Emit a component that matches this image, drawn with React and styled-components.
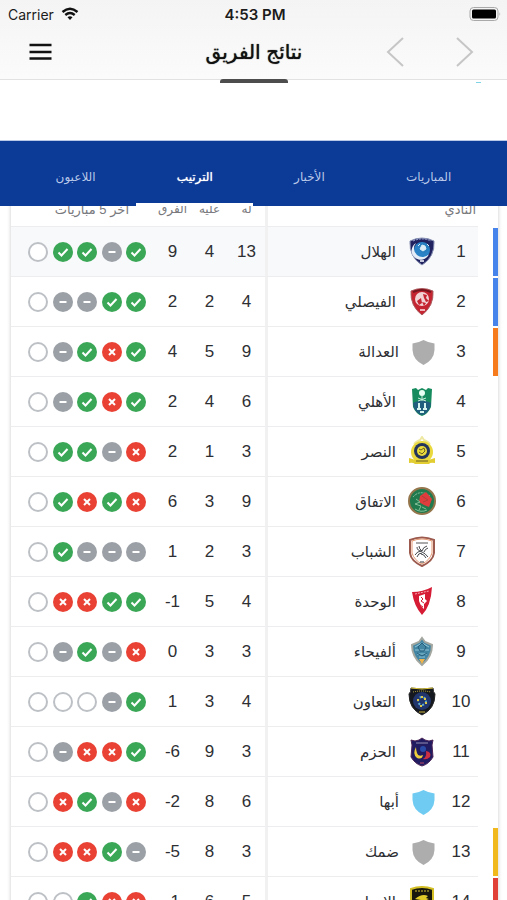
import styled, { createGlobalStyle } from 'styled-components';

const GlobalStyle = createGlobalStyle`
  * {
    box-sizing: border-box;
  }

  body {
    margin: 0;
    background: #fff;
    color: #2e2f33;
    font-family: 'Liberation Sans', 'DejaVu Sans', sans-serif;
  }
`;

const Screen = styled.div`
  display: flex;
  flex-direction: column;
  height: 100vh;
  overflow: hidden;
`;

const Header = styled.header`
  background: linear-gradient(#f4f4f4, #fbfbfb);
  border-bottom: 1px solid #e2e2e2;
`;

const StatusBar = styled.div`
  display: grid;
  grid-template-columns: 1fr auto 1fr;
  align-items: center;
  height: 28px;
  padding: 0 5px 0 8px;
  color: #1c1c1c;
  font-family: Inter, sans-serif;
  font-size: 14px;
`;

const Carrier = styled.div`
  display: flex;
  align-items: center;
  gap: 7px;
`;

const Clock = styled.time`
  font-size: 15px;
  font-weight: 600;
`;

const BatteryIcon = styled.svg`
  justify-self: end;
`;

const NavBar = styled.div`
  display: grid;
  grid-template-columns: 1fr auto 1fr;
  align-items: center;
  height: 51px;
  padding: 0 32px 4px 28px;
`;

const Title = styled.h1`
  margin: 0;
  padding-left: 5px;
  color: #111;
  font-size: 20px;
  font-weight: 400;
  line-height: 28px;
  text-shadow: 0 0 1px #111;
`;

const IconButton = styled.button`
  display: flex;
  padding: 0;
  border: 0;
  background: none;
  cursor: pointer;
`;

const Arrows = styled.div`
  display: flex;
  justify-content: flex-end;
  gap: 50px;
`;

const Banner = styled.div`
  display: grid;
  grid-template-columns: 1fr auto 1fr;
  align-items: start;
  flex: none;
  height: 62px;
  margin-top: -1px;
  padding-right: 26px;
  padding-left: 26px;
  border-bottom: 1px solid #b9c8e4;
`;

const Handle = styled.div`
  grid-column: 2;
  width: 68px;
  height: 4px;
  border-radius: 3px 3px 0 0;
  background: #4d4d4d;
`;

const Spinner = styled.div`
  justify-self: end;
  width: 5px;
  height: 1px;
  margin-top: 3px;
  background: #7fd4e6;
`;

const Tabs = styled.nav`
  display: flex;
  flex: none;
  height: 65px;
  padding: 0 15px;
  background: #0b3a97;
`;

const Tab = styled.a`
  display: flex;
  flex: 1 1 auto;
  align-items: center;
  justify-content: center;
  padding-top: 10px;
  border-bottom: 3px solid ${({ $active }) => ($active ? '#fff' : 'transparent')};
  color: ${({ $active }) => ($active ? '#fff' : '#b9c8e8')};
  font-size: 12px;
  text-decoration: none;
  text-shadow: ${({ $active }) => ($active ? '0 0 1px #fff' : 'none')};
`;

const Scroller = styled.main`
  flex: 1;
  overflow: hidden;
  padding: 0 9px 0 11px;
`;

const Card = styled.section`
  margin-top: -19px;
  box-shadow: 0 0 4px rgba(0, 0, 0, 0.22);
`;

const Table = styled.table`
  width: 100%;
  table-layout: fixed;
  border-collapse: separate;
  border-spacing: 0;
`;

const Col = styled.col`
  width: ${({ $width }) => ($width ? `${$width}px` : 'auto')};
`;

const Th = styled.th`
  height: 40px;
  padding: 5px ${({ $start }) => $start || 0}px 0 0;
  border-bottom: 1px solid #ededf0;
  border-left: ${({ $divider }) => ($divider ? '3px solid #f1f1f2' : 0)};
  color: #77787c;
  font-size: ${({ $wide }) => ($wide ? 13 : 12)}px;
  font-weight: 400;
  text-align: ${({ $start }) => ($start ? 'right' : 'center')};
`;

const Td = styled.td`
  height: 50px;
  padding: 1px 0 0;
  border-bottom: 1px solid #ededf0;
  border-left: ${({ $divider }) => ($divider ? '3px solid #f1f1f2' : 0)};
  background: ${({ $selected }) => ($selected ? '#f8f9fa' : 'transparent')};
  font-size: 17px;
  text-align: center;
`;

const ZoneCell = styled.td`
  padding: 0;
`;

const Zone = styled.div`
  width: 5px;
  height: 48px;
  background: ${({ $color }) => $color || 'transparent'};
`;

const Club = styled.div`
  display: flex;
  align-items: center;
  gap: 12px;
  padding-right: 8px;
  font-size: 15px;
`;

const Form = styled.div`
  display: flex;
  justify-content: space-between;
  width: 118px;
  margin-left: 17px;
`;

const Crest = ({ club }) => {
  const plain = { grey: '#adadad', sky: '#6fcbf2' }[club];

  if (plain) {
    return (
      <svg width="25" height="28" viewBox="0 0 25 28" aria-hidden="true">
        <path
          d="M12.500 2 Q18 5 23.500 5.500 V12 Q23 22 12.500 27 Q2 22 1.500 12 V5.500 Q7 5 12.500 2Z"
          fill={plain}
        />
      </svg>
    );
  }

  return (
    <svg width="28" height="32" viewBox="0 0 28 32" aria-hidden="true">
      {CRESTS[club]}
    </svg>
  );
};

const CRESTS = {
  hilal: (
    <>
      <path d="M2 5 Q14-1 26 5 Q27 21 14 29 Q1 21 2 5Z" fill="#20235f" stroke="#8790b4" />
      <path d="M5 5 Q14 1 23 5" stroke="#9aa5cf" strokeDasharray="2 1" fill="none" />
      <circle cx="14" cy="14" r="8" fill="#2a83c6" />
      <path d="M8 7a9 9 0 1 0 13 11a8 8 0 0 1-13-11" fill="#e5eef8" />
      <circle cx="16" cy="12" r="5" fill="#287fc0" />
      <path d="M14 9l3 1 1 3-3 2-3-2zM19 8l2 2M10 10l2-2" fill="#d9ecf8" stroke="#d9ecf8" />
      <path d="M12 25h4" stroke="#c4c7dc" strokeWidth="2" />
    </>
  ),
  faisaly: (
    <>
      <path d="M3 5 Q14 0 25 5 Q26 20 14 29 Q2 20 3 5Z" fill="#c52431" stroke="#aa5d60" />
      <path d="M5 6 Q14 2 23 6" stroke="#76161e" strokeWidth="2" fill="none" />
      <circle cx="14" cy="13" r="7" fill="#f1d5d6" />
      <path d="M9 15l4-3 1 5-3 2zM15 8l4 1-1 3 3 3-3 1-2-4zM14 16l4 1-2 3z" fill="#c52431" />
      <path d="M12 24h5" stroke="#f0b4b8" strokeWidth="2" />
    </>
  ),
  ahli: (
    <>
      <path d="M4 3l4-1 2 2 4-2 4 2 2-2 4 1-1 18q-3 7-9 9-6-2-9-9z" fill="#168b5d" />
      <path d="M5 17q9-5 18 0l-1 5q-3 6-8 7-5-1-8-7z" fill="#205f7d" />
      <circle cx="14" cy="7" r="3" fill="#e8fff3" />
      <path d="M14 10v5M10 12l8 3M18 12l-8 3" stroke="#c9eddd" />
      <path d="M11 17v6M17 17v6M9 23h4M15 23h4M12 26h4" stroke="#d6f4ee" strokeWidth="2" />
    </>
  ),
  nassr: (
    <>
      <path d="M6 8l2-2 2-1 2-1 2-3 2 3 2 1 2 1 2 2" stroke="#eee8a3" strokeWidth="2" fill="none" />
      <circle cx="14" cy="16" r="11" fill="#ead83f" />
      <path d="M1 22q13 5 26 0v5q-5-1-6 1H7q-2-2-6-1z" fill="#e2cd32" />
      <circle cx="14" cy="15" r="8" fill="#23345d" />
      <circle cx="14" cy="15" r="5" fill="#eadb3c" />
      <path d="M11 13l2 1 3-2 1 3-3 3-3-2M8 25h12" stroke="#695d24" fill="none" />
    </>
  ),
  ettifaq: (
    <>
      <circle cx="14" cy="15" r="13" fill="#217a4d" stroke="#95764c" strokeWidth="2" />
      <path d="M5 11q7-8 17-1" stroke="#8fc4a4" strokeDasharray="2 1" fill="none" />
      <path d="M12 10l6-4 6 7-3 8-5-2-5-3z" fill="#df3d3d" />
      <path d="M14 10l6 4-5 2" stroke="#a9423b" fill="none" />
      <path d="M8 13l4 3-5 2 6 2-2 4M14 21l4 2M7 23q6 4 12 1" stroke="#83bf97" fill="none" />
    </>
  ),
  shabab: (
    <>
      <path d="M2 4q12-5 24 0v13q-1 8-12 13Q3 25 2 17z" fill="#fff" stroke="#9c594d" strokeWidth="2" />
      <path d="M4 5q10-4 20 0v12q-2 7-10 11Q6 24 4 17z" fill="none" stroke="#e59a73" />
      <path d="M8 7h12" stroke="#555" />
      <path d="M14 15q1-4 5-5M16 16q1-3 4-4M14 15q-5 0-7 4M14 17q-4 0-5 4M14 16q3 1 6 5M13 18q3 0 5 4M9 11q0 4 5 4M11 10q0 3 3 5" stroke="#46494d" fill="none" />
      <path d="M12 26h4" stroke="#333" />
    </>
  ),
  wehda: (
    <>
      <path d="M4 6q11 0 20-5-1 19-10 28Q6 20 4 6z" fill="#d61c35" />
      <path d="M7 8l14-3" stroke="#f7a9b3" strokeDasharray="2 1" />
      <path d="M11 10l6-2v5l2 2-3 3v5l-3-3-2-5z" fill="#fff" />
      <path d="M13 11l2 2-2 2 3 2M12 19l3 2" stroke="#d61c35" fill="none" />
    </>
  ),
  fayha: (
    <>
      <path d="M14 2l3 4 7 3q0 12-10 20Q4 21 4 9l7-3z" fill="#4386a4" stroke="#a3a79f" strokeWidth="2" />
      <path d="M7 11l7-4 7 4M7 14h14M9 18h10M11 21h6" stroke="#8fc6d7" fill="none" />
      <path d="M10 11l4-4 4 4-2 4h-4zM9 17l5 3 5-3" stroke="#265e7d" fill="none" />
      <path d="M11 23h6l-3 5z" fill="#f2b44a" />
    </>
  ),
  taawoun: (
    <>
      <path d="M3 2q11 2 22 0 0 4 2 6 0 15-13 21Q1 23 1 8q2-2 2-6z" fill="#15191f" stroke="#252525" />
      <path d="M3 2q11 2 22 0" fill="none" stroke="#dbc536" />
      <path d="M5 6q9-2 18 0" fill="none" stroke="#c9b53c" strokeDasharray="1 1" />
      <circle cx="14" cy="15" r="9" fill="#22366c" />
      <circle cx="14" cy="15" r="4" stroke="#5aacd8" strokeWidth="2" fill="none" strokeDasharray="2 2" />
      <path d="M14 10v2M9 14h2M17 17h2M13 19v2M16 13h2" stroke="#dfc943" strokeWidth="2" />
      <path d="M11 26h6" stroke="#cfb73d" />
    </>
  ),
  hazem: (
    <>
      <path d="M3 4l4 1 4-1 3-2 3 2 4 1 4-1-1 5 1 12q-4 7-11 9-7-2-11-9L4 9z" fill="#211b61" stroke="#4b2557" />
      <path d="M8 7h12" stroke="#9390b4" />
      <path d="M8 11q-4 7 1 11 5 2 6-3-5 2-6-2-1-3-1-6z" fill="#edcf3e" />
      <path d="M18 15q6 1 4 6-3 3-7 2 4-2 3-8z" fill="#cc2e42" />
      <circle cx="15" cy="13" r="3" fill="#294aa7" />
      <path d="M12 27h4" stroke="#bd4b64" />
    </>
  ),
  ittihad: (
    <>
      <path d="M3 3q11-4 22 0v18q-3 6-11 9-8-3-11-9z" fill="#17170e" stroke="#d3bf25" strokeWidth="2" />
      <path d="M7 5h14" stroke="#d8c52c" strokeDasharray="2 1" />
      <path d="M7 13q7-6 13-3l-2 2 3 1-5 2-2 4H8l5-5z" fill="#dfca28" />
      <path d="M6 21h16v2H6z" fill="#dfca28" />
    </>
  ),
};

const RESULTS = {
  w: { label: 'فوز', color: '#3aa757', path: 'M5.500 10.500l3 3 6-6.500' },
  l: { label: 'خسارة', color: '#e94235', path: 'M7 7l6 6M13 7l-6 6' },
  d: { label: 'تعادل', color: '#9aa0a6', path: 'M6.500 10h7' },
};

const Result = ({ type }) => {
  const result = RESULTS[type];

  return (
    <svg width="20" height="20" viewBox="0 0 20 20" aria-label={result?.label}>
      {result ? (
        <>
          <circle cx="10" cy="10" r="10" fill={result.color} />
          <path d={result.path} fill="none" stroke="#fff" strokeWidth="2" />
        </>
      ) : (
        <circle cx="10" cy="10" r="9" fill="#fff" stroke="#bdc1c6" strokeWidth="2" />
      )}
    </svg>
  );
};

const tabs = ['المباريات', 'الأخبار', 'الترتيب', 'اللاعبون'];

// form goes from left to right, '-' is a match not played yet
const teams = [
  { name: 'الهلال', crest: 'hilal', scored: 13, conceded: 4, diff: 9, form: '-wwdw', zone: '#4683ea' },
  { name: 'الفيصلي', crest: 'faisaly', scored: 4, conceded: 2, diff: 2, form: '-ddww', zone: '#4683ea' },
  { name: 'العدالة', crest: 'grey', scored: 9, conceded: 5, diff: 4, form: '-dwlw', zone: '#f57b1d' },
  { name: 'الأهلي', crest: 'ahli', scored: 6, conceded: 4, diff: 2, form: '-dwlw' },
  { name: 'النصر', crest: 'nassr', scored: 3, conceded: 1, diff: 2, form: '-wwdl' },
  { name: 'الاتفاق', crest: 'ettifaq', scored: 9, conceded: 3, diff: 6, form: '-wlwl' },
  { name: 'الشباب', crest: 'shabab', scored: 3, conceded: 2, diff: 1, form: '-wddd' },
  { name: 'الوحدة', crest: 'wehda', scored: 4, conceded: 5, diff: -1, form: '-llww' },
  { name: 'ألفيحاء', crest: 'fayha', scored: 3, conceded: 3, diff: 0, form: '-dwdl' },
  { name: 'التعاون', crest: 'taawoun', scored: 4, conceded: 3, diff: 1, form: '---dw' },
  { name: 'الحزم', crest: 'hazem', scored: 3, conceded: 9, diff: -6, form: '-dllw' },
  { name: 'أبها', crest: 'sky', scored: 6, conceded: 8, diff: -2, form: '-lwdl' },
  { name: 'ضمك', crest: 'grey', scored: 3, conceded: 8, diff: -5, form: '-llwd', zone: '#f2b91f' },
  { name: 'الاتحاد', crest: 'ittihad', scored: 5, conceded: 6, diff: -1, form: '--wll', zone: '#e04038' },
];

const TeamRow = ({ team, rank }) => {
  const selected = rank === 1;

  return (
    <tr>
      <ZoneCell>
        <Zone $color={team.zone} />
      </ZoneCell>
      <Td $selected={selected}>{rank}</Td>
      <Td $selected={selected} $divider>
        <Club>
          <Crest club={team.crest} />
          <span>{team.name}</span>
        </Club>
      </Td>
      <Td $selected={selected}>{team.scored}</Td>
      <Td $selected={selected}>{team.conceded}</Td>
      <Td $selected={selected} dir="ltr">
        {team.diff}
      </Td>
      <Td $selected={selected} dir="ltr">
        <Form>
          {team.form.split('').map((type, i) => (
            <Result key={i} type={type} />
          ))}
        </Form>
      </Td>
    </tr>
  );
};

const App = () => {
  return (
    <Screen>
      <GlobalStyle />
      <Header>
        <StatusBar>
          <Carrier>
            Carrier
            <svg width="18" height="14" viewBox="0 0 18 14" aria-hidden="true">
              <path d="M1.500 5q7.500-6.500 15 0M4.300 8q4.700-4 9.400 0" fill="none" stroke="#111" strokeWidth="2.400" />
              <path d="M6.500 10.300q2.500-2 5 0L9 13z" fill="#111" />
            </svg>
          </Carrier>
          <Clock>4:53 PM</Clock>
          <BatteryIcon width="33" height="16" viewBox="0 0 33 16" aria-hidden="true">
            <rect x="1" y="1.500" width="28" height="13" rx="3.500" fill="#f4f4f4" stroke="#a9a9a9" />
            <rect x="3" y="3.500" width="24" height="9" rx="1.500" fill="#000" />
            <path d="M30.500 6q1.500 2 0 4z" fill="#a9a9a9" />
          </BatteryIcon>
        </StatusBar>
        <NavBar>
          <IconButton aria-label="القائمة">
            <svg width="25" height="18" viewBox="0 0 25 18">
              <path d="M1.500 2h22M1.500 9h22M1.500 15.500h22" stroke="#111" strokeWidth="2.300" />
            </svg>
          </IconButton>
          <Title dir="rtl">نتائج الفريق</Title>
          <Arrows>
            <IconButton aria-label="السابق">
              <svg width="20" height="32" viewBox="0 0 20 32">
                <path d="M18 2L3 16l15 14" fill="none" stroke="#c6c6c6" strokeWidth="2" />
              </svg>
            </IconButton>
            <IconButton aria-label="التالي">
              <svg width="20" height="32" viewBox="0 0 20 32">
                <path d="M2 2l15 14L2 30" fill="none" stroke="#c6c6c6" strokeWidth="2" />
              </svg>
            </IconButton>
          </Arrows>
        </NavBar>
      </Header>
      <Banner>
        <Handle />
        <Spinner />
      </Banner>
      <Tabs dir="rtl">
        {tabs.map((tab) => (
          <Tab key={tab} href="#" $active={tab === 'الترتيب'}>
            {tab}
          </Tab>
        ))}
      </Tabs>
      <Scroller>
        <Card>
          <Table dir="rtl">
            <colgroup>
              <Col $width={20} />
              <Col $width={34} />
              <Col />
              <Col $width={37} />
              <Col $width={37} />
              <Col $width={37} />
              <Col $width={143} />
            </colgroup>
            <thead>
              <tr>
                <td />
                <Th colSpan={2} $start={2} $divider $wide>
                  النادي
                </Th>
                <Th>له</Th>
                <Th>عليه</Th>
                <Th>الفرق</Th>
                <Th $start={25} $wide>
                  آخر 5 مباريات
                </Th>
              </tr>
            </thead>
            <tbody>
              {teams.map((team, i) => (
                <TeamRow key={team.name} team={team} rank={i + 1} />
              ))}
            </tbody>
          </Table>
        </Card>
      </Scroller>
    </Screen>
  );
};

export default App;
